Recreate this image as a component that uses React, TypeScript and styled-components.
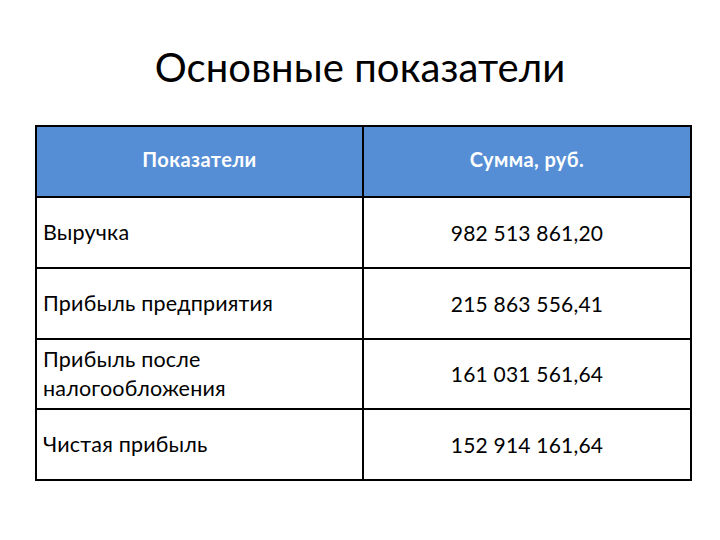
import styled, { createGlobalStyle } from "styled-components";

const GlobalStyle = createGlobalStyle`
  html, body {
    margin: 0;
    padding: 0;
    background: #ffffff;
  }
  body {
    font-family: Lato, "Open Sans", sans-serif;
    color: #000000;
  }
`;

const Slide = styled.div`
  width: 720px;
  height: 540px;
  display: flex;
  flex-direction: column;
  align-items: center;
  box-sizing: border-box;
  padding-top: 42px;
`;

const Title = styled.h1`
  margin: 0;
  height: 50px;
  line-height: 50px;
  font-size: 40px;
  font-weight: 400;
  letter-spacing: 0.1px;
`;

const Table = styled.table`
  align-self: flex-start;
  margin: 33px 0 0 35px;
  width: 655px;
  border-collapse: collapse;
  table-layout: fixed;
`;

const HeadCell = styled.th`
  box-sizing: border-box;
  height: 71px;
  background: #558ed5;
  color: #ffffff;
  font-size: 20px;
  line-height: 24px;
  font-weight: 700;
  text-align: center;
  border: 2px solid #000000;
  padding: 0 0 6px;
  letter-spacing: 0.4px;
`;

const Cell = styled.td<{ $num?: boolean }>`
  box-sizing: border-box;
  height: 70.75px;
  border: 2px solid #000000;
  padding: 0 6px;
  font-size: ${({ $num }) => ($num ? "21px" : "21.5px")};
  line-height: 29px;
  text-align: ${({ $num }) => ($num ? "center" : "left")};
  letter-spacing: 0.2px;
`;

const rows = [
  { name: "Выручка", sum: "982 513 861,20" },
  { name: "Прибыль предприятия", sum: "215 863 556,41" },
  { name: "Прибыль после\nналогообложения", sum: "161 031 561,64" },
  { name: "Чистая прибыль", sum: "152 914 161,64" },
];

export default function App() {
  return (
    <>
      <GlobalStyle />
      <Slide>
        <Title>Основные показатели</Title>
        <Table>
          <colgroup>
            <col style={{ width: 327 }} />
            <col style={{ width: 328 }} />
          </colgroup>
          <thead>
            <tr>
              <HeadCell>Показатели</HeadCell>
              <HeadCell>Сумма, руб.</HeadCell>
            </tr>
          </thead>
          <tbody>
            {rows.map((r) => (
              <tr key={r.sum}>
                <Cell>
                  {r.name.split("\n").map((line, i) => (
                    <div key={i}>{line}</div>
                  ))}
                </Cell>
                <Cell $num>{r.sum}</Cell>
              </tr>
            ))}
          </tbody>
        </Table>
      </Slide>
    </>
  );
}
